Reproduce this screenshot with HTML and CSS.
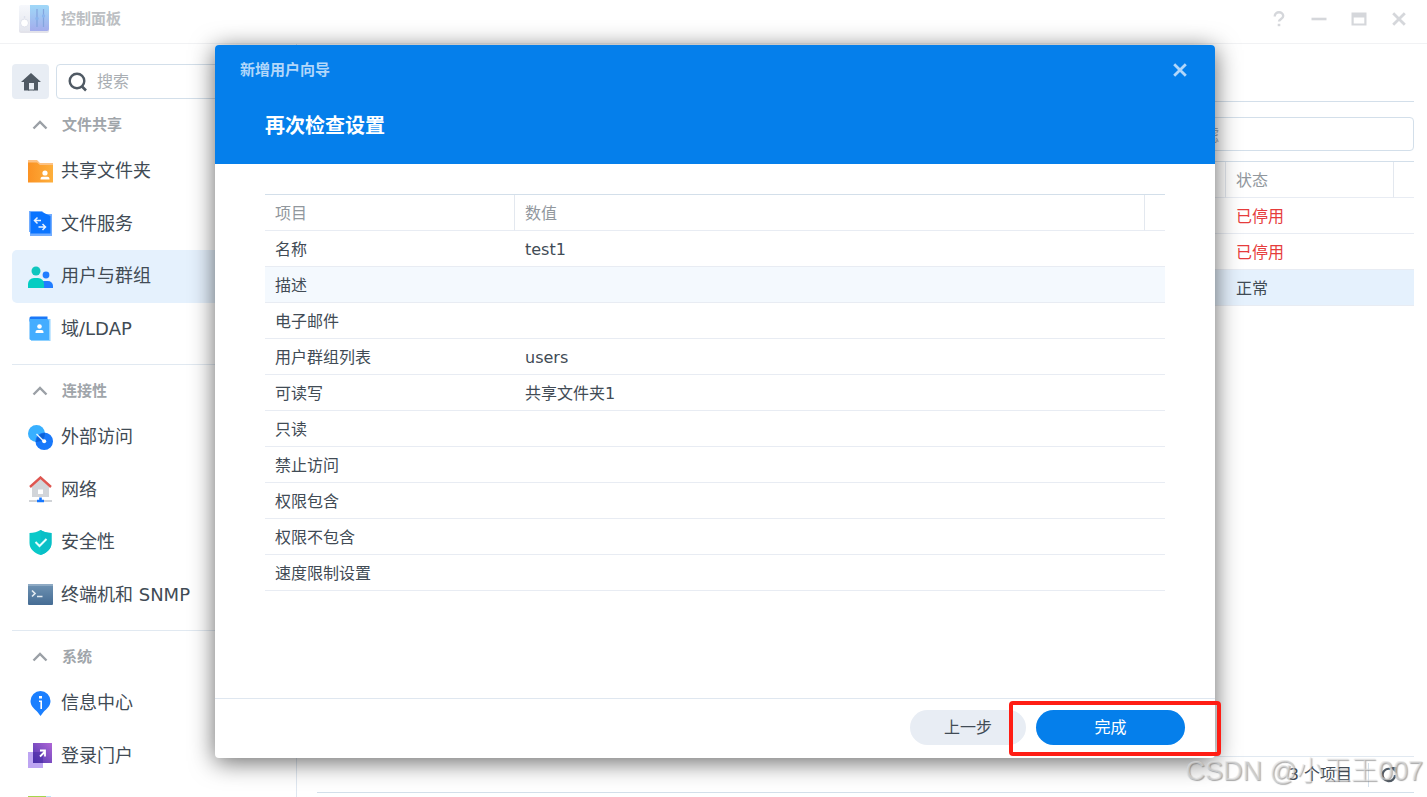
FILE: index.html
```html
<!DOCTYPE html>
<html lang="zh-CN">
<head>
<meta charset="utf-8">
<title>控制面板</title>
<link rel="stylesheet" href="styles.css">
</head>
<body>
<div class="window">
  <header class="titlebar">
    <svg class="app-icon" viewBox="0 0 32 30" aria-hidden="true">
      <defs>
        <linearGradient id="panel" x1="0" y1="0" x2="0" y2="1"><stop offset="0" stop-color="#9fd8f8"/><stop offset="1" stop-color="#a3acec"/></linearGradient>
        <linearGradient id="knob" x1="0" y1="0" x2="0" y2="1"><stop offset="0" stop-color="#f6f8fc"/><stop offset="1" stop-color="#e4e6ee"/></linearGradient>
      </defs>
      <rect x="1" y="2" width="30" height="27" rx="2" fill="#e3e3ea"/>
      <path d="M3 1h9v26H3a2 2 0 0 1-2-2V3a2 2 0 0 1 2-2z" fill="url(#knob)"/>
      <path d="M12 1h17a2 2 0 0 1 2 2v22a2 2 0 0 1-2 2H12z" fill="url(#panel)"/>
      <circle cx="6.500" cy="19" r="4" fill="#fff" stroke="#dfe2ec"/>
      <circle cx="6.500" cy="13" r=".8" fill="#d5dae6"/>
      <path d="M19 5v18M25.500 5v18" stroke="#84a5de" stroke-width="1.200"/>
      <circle cx="19" cy="14.500" r="1.700" fill="#8ab6ee"/><circle cx="25.500" cy="12" r="1.700" fill="#8ab6ee"/>
    </svg>
    <h1 class="app-title">控制面板</h1>
    <div class="window-tools">
      <button class="tool" aria-label="帮助"><svg viewBox="0 0 16 16"><path d="M3.800 5.500V5a4 3.600 0 0 1 8.400 0c0 2.800-4.200 3-4.200 5.600" fill="none" stroke="currentColor" stroke-width="2.400"/><path d="M6.700 12.800h2.600v2.400H6.700z" fill="currentColor"/></svg></button>
      <button class="tool" aria-label="最小化"><svg viewBox="0 0 16 16"><path d="M.5 8h15" stroke="currentColor" stroke-width="2.600"/></svg></button>
      <button class="tool" aria-label="最大化"><svg viewBox="0 0 16 16"><path d="M.5 1.500h15v13H.5z" fill="currentColor"/><path d="M2.700 6.500h10.600v6H2.700z" fill="#fff"/></svg></button>
      <button class="tool" aria-label="关闭窗口"><svg viewBox="0 0 16 16"><path d="M2.200 2.200l11.600 11.600M13.800 2.200L2.200 13.800" stroke="currentColor" stroke-width="2.800"/></svg></button>
    </div>
  </header>
  <div class="workspace">
    <nav class="sidebar">
      <div class="search-row">
        <button class="home" aria-label="主页"><svg viewBox="0 0 20 18"><path d="M10 0L20 9h-3v8.500h-5V10H8.500v7.500H3V9H0z" fill="#505a64"/><path d="M8 10h5v7.500H8z" fill="#e8edf4"/><path d="M7 16.500h6v1H7z" fill="#505a64"/></svg></button>
        <label class="search">
          <svg viewBox="0 0 20 20" aria-hidden="true"><circle cx="9" cy="9" r="7.300" fill="none" stroke="#505a64" stroke-width="2.400"/><path d="M13.500 14l4.500 4.500" stroke="#505a64" stroke-width="2.600"/></svg>
          <input type="text" placeholder="搜索" aria-label="搜索">
        </label>
      </div>
      <section class="group">
        <button class="group-head"><svg viewBox="0 0 16 10"><path d="M1.500 8.500L8 2l6.500 6.500" fill="none" stroke="#9ba0a6" stroke-width="2.400"/></svg>文件共享</button>
        <div class="items">
          <a class="item" href="#"><svg viewBox="0 0 25 25"><defs><linearGradient id="folder"><stop offset="0" stop-color="#fb9223"/><stop offset="1" stop-color="#fdaf3c"/></linearGradient></defs><path d="M0 1h9l3 3h13v6H0z" fill="#fdc283"/><path d="M0 3.500h9L12 6h13v17.500H0z" fill="url(#folder)"/><circle cx="17" cy="14" r="2.600" fill="#fff"/><path d="M12.500 20.500v-.8a2 2 0 0 1 2-2h5a2 2 0 0 1 2 2v.8z" fill="#fff"/></svg>共享文件夹</a>
          <a class="item" href="#"><svg viewBox="0 0 25 25"><path d="M1 0h13l3 3h7v22H2V21H1z" fill="#72adff"/><path d="M2.500 1H14l8.500 4v17.500h-20z" fill="#0a74ff"/><path d="M6.500 9.500h6.500M9.500 6.500l-3 3 3 3M10.500 16h7M14.500 13l3 3-3 3" fill="none" stroke="#e8f2ff" stroke-width="1.500"/></svg>文件服务</a>
          <a class="item active" href="#"><svg viewBox="0 0 25 25"><circle cx="18" cy="11" r="3.400" fill="#217dff"/><path d="M10 24v-2a6 5 0 0 1 6-5h4a5 5 0 0 1 5 5v2z" fill="#217dff"/><circle cx="8" cy="7" r="4.500" fill="#0fc6be"/><path d="M0 24v-4a6 6 0 0 1 6-6h4a6 6 0 0 1 6 6v4z" fill="#04cdc2"/></svg>用户与群组</a>
          <a class="item" href="#"><svg viewBox="0 0 25 25"><path d="M3 3h19.500v22H3z" fill="#8fd1ff"/><path d="M1.500 2a1.500 1.500 0 0 1 1.500-1.500h16.500v5h-18z" fill="#1a78f8"/><path d="M1.500 3h18L21 4.500V24H3a1.500 1.500 0 0 1-1.500-1.500z" fill="#44adff"/><circle cx="11.500" cy="10.500" r="2.300" fill="#fff"/><path d="M7.500 17v-1a2 2 0 0 1 2-2h4a2 2 0 0 1 2 2v1z" fill="#fff"/></svg>域/LDAP</a>
        </div>
      </section>
      <section class="group">
        <button class="group-head"><svg viewBox="0 0 16 10"><path d="M1.500 8.500L8 2l6.500 6.500" fill="none" stroke="#9ba0a6" stroke-width="2.400"/></svg>连接性</button>
        <div class="items">
          <a class="item" href="#"><svg viewBox="0 0 25 25"><circle cx="8.500" cy="8.500" r="8.500" fill="#38b0ff"/><circle cx="16.200" cy="16.200" r="8.800" fill="#1878fa"/><path d="M17 8a8.500 8.500 0 0 1-9 9A8.800 8.800 0 0 1 17 8z" fill="#0b61d8"/><path d="M8.500 9l7 7" stroke="#e8f4ff" stroke-width="1.400"/><circle cx="16.200" cy="16.200" r="2" fill="#fff"/></svg>外部访问</a>
          <a class="item" href="#"><svg class="tall" viewBox="0 0 25 27"><path d="M12.500 3L21 11v10H4V11z" fill="#d2d5d9"/><path d="M10 13.500h5v4.500h-5z" fill="#fff"/><path d="M2 11L12.500 1.500 23 11" fill="none" stroke="#de5650" stroke-width="2.400"/><path d="M1 25h23" stroke="#d0d3d7" stroke-width="2"/><path d="M12.500 21.500v3M9 25h7" stroke="#1677ff" stroke-width="2.600"/></svg>网络</a>
          <a class="item" href="#"><svg viewBox="0 0 25 25"><path d="M12.500 0c3 2 7 3 11 3v10c0 6-5 10-11 12-6-2-11-6-11-12V3c4 0 8-1 11-3z" fill="#0ac9c9"/><path d="M12.500 0c3 2 7 3 11 3v10c0 6-5 10-11 12z" fill="#08bfc7"/><path d="M7.500 12l4 4 7-7" fill="none" stroke="#e5ffff" stroke-width="2"/></svg>安全性</a>
          <a class="item" href="#"><svg viewBox="0 0 25 25"><defs><linearGradient id="term" x1="0" y1="0" x2="0" y2="1"><stop offset="0" stop-color="#6f93b3"/><stop offset="1" stop-color="#456c94"/></linearGradient></defs><rect y="2" width="25" height="21" rx="1" fill="url(#term)"/><path d="M0 2h25v2H0z" fill="#8eaac4"/><path d="M4 8.500l3 3-3 3M9 14.500h5.500" fill="none" stroke="#e1e9f0" stroke-width="1.700"/></svg>终端机和 SNMP</a>
        </div>
      </section>
      <section class="group">
        <button class="group-head"><svg viewBox="0 0 16 10"><path d="M1.500 8.500L8 2l6.500 6.500" fill="none" stroke="#9ba0a6" stroke-width="2.400"/></svg>系统</button>
        <div class="items">
          <a class="item" href="#"><svg viewBox="0 0 25 25"><path d="M12.500 0a10 10 0 0 1 10 10c0 5-4 8-7 11l-3 4-3-4c-3-3-7-6-7-11a10 10 0 0 1 10-10z" fill="#1a7fff"/><path d="M11 5h3v2.500h-3zM11 9.500h3V18h-1.600v-7H11z" fill="#fff"/></svg>信息中心</a>
          <a class="item" href="#"><svg viewBox="0 0 25 25"><defs><linearGradient id="portal" x1="1" y1="0" x2="0" y2="1"><stop offset="0" stop-color="#b066d6"/><stop offset="1" stop-color="#4b36ae"/></linearGradient></defs><path d="M0 9h15v16H0z" fill="#bda5f2"/><path d="M5 0h19v20H5z" fill="url(#portal)"/><path d="M5 9h10v11H5z" fill="#4528a4" opacity=".5"/><path d="M12 13.500l5-5M12 7.500h5v6" fill="none" stroke="#fff" stroke-width="1.800"/></svg>登录门户</a>
          <a class="item" href="#" aria-label="更多"><svg viewBox="0 0 25 25"><path d="M3 0h20v25H3z" fill="#bfe4fb"/><path d="M0 0h18v25H0z" fill="#a5d64c"/></svg></a>
          <span></span>
        </div>
      </section>
    </nav>
    <main class="main">
      <div class="tabs"></div>
      <div class="toolbar"><input class="filter" type="text" placeholder="过滤" aria-label="过滤"></div>
      <table class="grid users">
        <colgroup><col><col class="col-status"><col class="col-end"></colgroup>
        <thead><tr><th></th><th>状态</th><th></th></tr></thead>
        <tbody>
          <tr><td></td><td class="off">已停用</td><td></td></tr>
          <tr><td></td><td class="off">已停用</td><td></td></tr>
          <tr class="selected"><td></td><td>正常</td><td></td></tr>
        </tbody>
      </table>
      <footer class="status">
        <span class="count">3 个项目</span>
        <button class="refresh" aria-label="刷新"><svg viewBox="0 0 16 16"><path d="M9.500 2A6.200 6.200 0 1 0 14 8" fill="none" stroke="#505a64" stroke-width="2.200"/><path d="M9 0h6.500v6.500z" fill="#505a64"/></svg></button>
      </footer>
    </main>
  </div>
</div>

<div class="dialog" role="dialog" aria-labelledby="dialog-title">
  <header class="dialog-head">
    <div class="dialog-bar">
      <span id="dialog-title">新增用户向导</span>
      <button class="dialog-close" aria-label="关闭"><svg viewBox="0 0 16 16"><path d="M2.200 2.200l11.600 11.600M13.800 2.200L2.200 13.800" stroke="currentColor" stroke-width="2.800"/></svg></button>
    </div>
    <h2>再次检查设置</h2>
  </header>
  <div class="dialog-body">
    <table class="grid">
      <colgroup><col class="col-item"><col><col class="col-end"></colgroup>
      <thead><tr><th>项目</th><th>数值</th><th></th></tr></thead>
      <tbody>
        <tr><td>名称</td><td>test1</td><td></td></tr>
        <tr class="hover"><td>描述</td><td></td><td></td></tr>
        <tr><td>电子邮件</td><td></td><td></td></tr>
        <tr><td>用户群组列表</td><td>users</td><td></td></tr>
        <tr><td>可读写</td><td>共享文件夹1</td><td></td></tr>
        <tr><td>只读</td><td></td><td></td></tr>
        <tr><td>禁止访问</td><td></td><td></td></tr>
        <tr><td>权限包含</td><td></td><td></td></tr>
        <tr><td>权限不包含</td><td></td><td></td></tr>
        <tr><td>速度限制设置</td><td></td><td></td></tr>
      </tbody>
    </table>
  </div>
  <footer class="dialog-foot">
    <button class="btn">上一步</button>
    <button class="btn primary">完成</button>
    <div class="marker"></div>
  </footer>
</div>
<div class="watermark">CSDN @小王王007</div>
</body>
</html>
```

FILE: styles.css
```css
* { box-sizing: border-box; }
body {
  margin: 0;
  height: 100vh;
  overflow: hidden;
  position: relative;
  background: #fff;
  color: #414b55;
  font: 16px/24px "DejaVu Sans", "Noto Sans CJK SC", sans-serif;
}
button, input { font: inherit; color: inherit; }
button { border: 0; padding: 0; background: none; }
svg { display: block; flex: none; }
h1, h2 { margin: 0; }

.window { height: 100%; display: flex; flex-direction: column; }
.titlebar {
  flex: none;
  height: 44px;
  display: flex;
  align-items: center;
  gap: 11px;
  padding: 0 20px 6px 18px;
  border-bottom: 1px solid #f1f2f4;
}
.app-icon { width: 32px; height: 30px; }
.app-title { font-size: 15px; font-weight: 700; color: #bcbfc3; }
.window-tools { margin-left: auto; display: flex; gap: 24px; color: #d5d7db; }
.tool svg, .dialog-close svg { width: 16px; height: 16px; }

.workspace { flex: 1; min-height: 0; display: flex; }
.sidebar {
  flex: none;
  width: 297px;
  padding: 20px 12px 0;
  border-right: 1px solid #dfe7f0;
  overflow: hidden;
}
.search-row { display: flex; gap: 7px; }
.home {
  width: 37px;
  height: 35px;
  display: grid;
  place-items: center;
  border-radius: 4px;
  background: #e8edf4;
}
.home svg { width: 20px; height: 18px; }
.search {
  flex: 1;
  min-width: 0;
  height: 35px;
  display: flex;
  align-items: center;
  gap: 9px;
  padding: 1px 11px 0;
  border: 1px solid #d3dfea;
  border-radius: 4px;
}
.search svg { width: 20px; height: 20px; }
.search input { width: 100%; min-width: 0; border: 0; padding: 0; outline: 0; background: none; }
input::placeholder { color: #a9aeb3; opacity: 1; }

.group { padding-bottom: 9px; border-bottom: 1px solid #e1e9f1; }
.group-head {
  width: 100%;
  height: 46px;
  display: flex;
  align-items: center;
  gap: 14px;
  padding: 6px 0 0 20px;
  font-size: 15px;
  font-weight: 700;
  color: #a0a5aa;
}
.group-head svg { width: 16px; height: 10px; }
.items { height: 210px; display: grid; grid-auto-rows: 1fr; }
.item {
  display: flex;
  align-items: center;
  gap: 8px;
  padding-left: 16px;
  border-radius: 5px;
  font-size: 18px;
  white-space: nowrap;
  color: inherit;
  text-decoration: none;
}
.item svg { width: 25px; height: 25px; }
.item svg.tall { height: 27px; }
.item.active { background: #e5f1fd; }

.main { flex: 1; min-width: 0; display: flex; flex-direction: column; padding: 0 13px 4px 20px; }
.tabs { flex: none; height: 58px; border-bottom: 1px solid #d3dfea; }
.toolbar { display: flex; justify-content: flex-end; padding: 15px 0 10px; }
.filter {
  width: 264px;
  height: 34px;
  padding: 2px 36px 0;
  border: 1px solid #d3dfea;
  border-radius: 4px;
}

.grid { width: 100%; table-layout: fixed; border-spacing: 0; border-top: 1px solid #d3dfea; }
.grid th, .grid td {
  height: 36px;
  padding: 2px 10px 0;
  border-bottom: 1px solid #e8ecf3;
  text-align: left;
  font-weight: 400;
  white-space: nowrap;
}
.grid th { color: #91979d; border-right: 1px solid #e3e8ef; }
.grid th:last-child { border-right: 0; }
.col-item { width: 250px; }
.col-status { width: 168px; }
.col-end { width: 20px; }
.hover { background: #f4f9fe; }
.selected { background: #e5f1fd; }
.off { color: #e63c3c; }

.status {
  height: 37px;
  margin-top: auto;
  display: flex;
  align-items: center;
  justify-content: flex-end;
  border-top: 1px solid #e1e9f1;
  border-bottom: 1px solid #d3dfea;
}
.count { padding-right: 16px; border-right: 1px solid #d3dfea; }
.refresh { padding: 0 17px 0 12px; }
.refresh svg { width: 16px; height: 16px; }

.dialog {
  position: absolute;
  top: 45px;
  left: 215px;
  width: 1000px;
  max-width: calc(100% - 230px);
  border-radius: 4px;
  background: #fff;
  box-shadow: 0 4px 24px rgba(0, 0, 0, .6);
}
.dialog-head {
  padding: 13px 25px 24px;
  border-radius: 4px 4px 0 0;
  background: #057feb;
  color: #fff;
}
.dialog-bar {
  display: flex;
  align-items: center;
  justify-content: space-between;
  font-size: 15px;
  font-weight: 700;
  color: #b2d7fa;
}
.dialog-close { padding: 0 2px; }
.dialog-head h2 { padding: 30px 25px 0; font-size: 20px; line-height: 28px; font-weight: 700; }
.dialog-body { padding: 30px 50px 107px; }
.dialog-foot {
  position: relative;
  display: flex;
  justify-content: flex-end;
  gap: 10px;
  padding: 11px 30px 13px;
  border-top: 1px solid #dfe7f0;
}
.btn { min-width: 116px; height: 35px; border-radius: 18px; background: #e8edf4; }
.btn.primary { min-width: 149px; background: #057feb; color: #fff; }
.marker {
  position: absolute;
  top: 2px;
  right: -6px;
  width: 212px;
  height: 55px;
  border: 4px solid #ff1d14;
  border-radius: 4px;
  pointer-events: none;
}
.watermark {
  position: absolute;
  right: 4px;
  bottom: 8px;
  font: 300 27px/36px "Liberation Sans", "Noto Sans CJK SC", sans-serif;
  color: rgba(225, 225, 225, .6);
  text-shadow: 1px 1px 1px rgba(110, 110, 110, .6);
  pointer-events: none;
}
```
